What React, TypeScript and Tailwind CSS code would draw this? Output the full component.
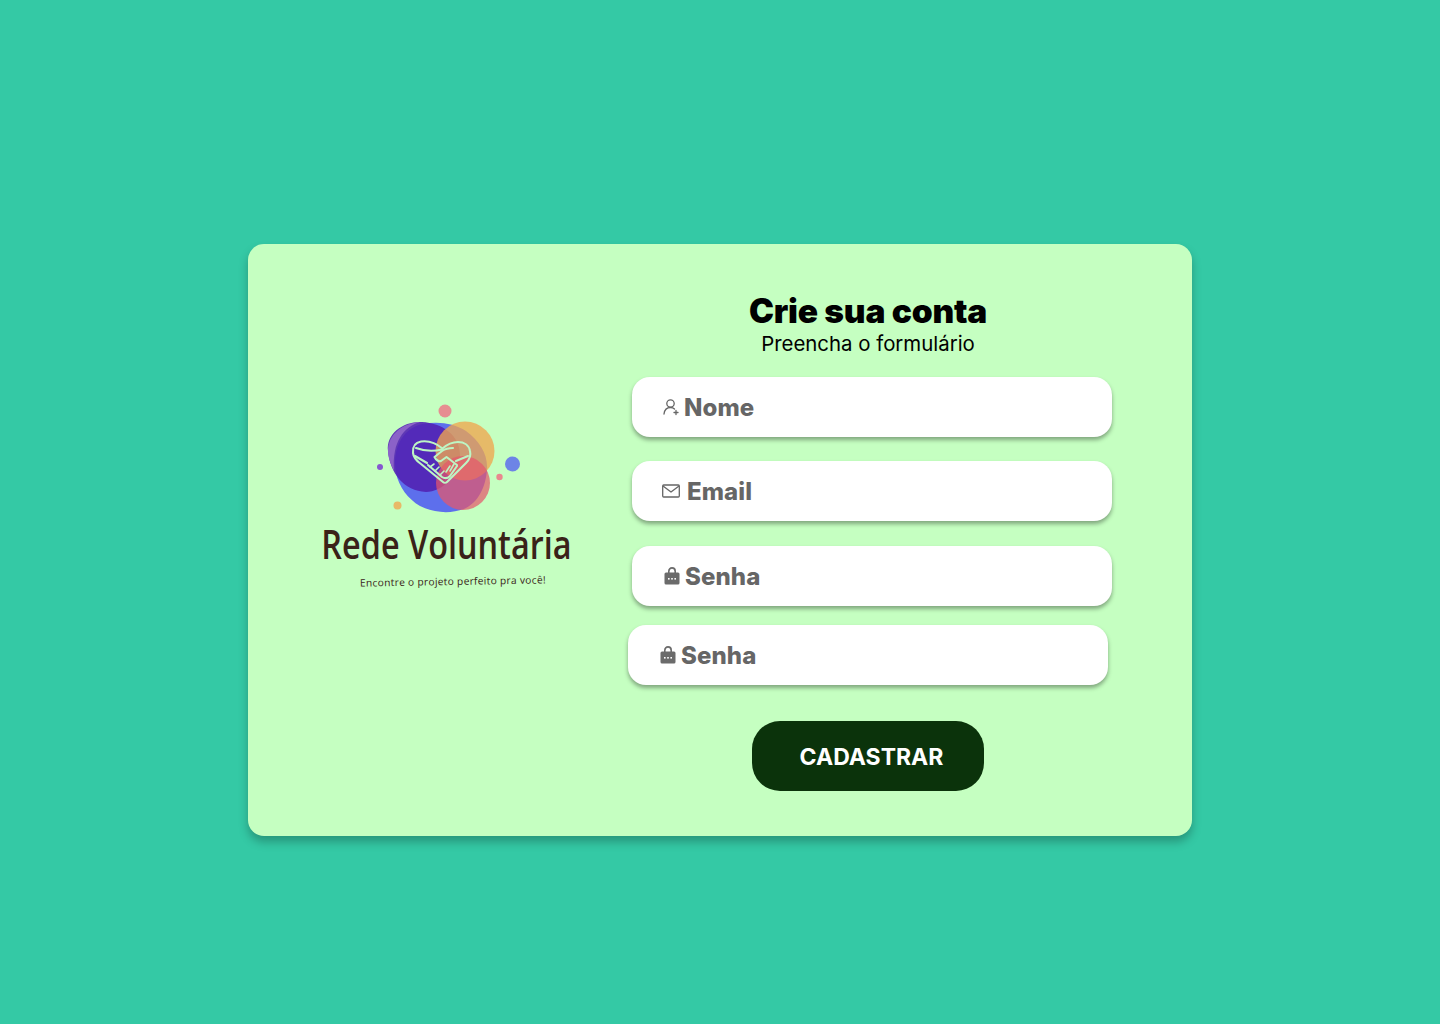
import React from "react";

const LogoArt = () => (
  <svg width="155" height="115" viewBox="0 0 155 115" className="-ml-[2px] block">
    <path d="M26 72C22 52 30 28 52 23C68 20 84 22 96 30C110 40 118 54 117 68C116 86 108 102 94 108C80 113 64 112 50 105C38 98 29 86 26 72Z" fill="#5d6fec" />
    <path d="M18 50C16 32 34 20 52 21C72 22 90 34 90 54C90 74 72 91 56 91C34 90 20 72 18 50Z" fill="#5222b4" opacity="0.9" />
    <path d="M24 70C20 62 18 56 18 50C18 34 32 22 50 21C34 26 22 40 24 70Z" fill="#8b62c8" />
    <circle cx="95" cy="50" r="29.500" fill="#f0a750" opacity="0.78" />
    <circle cx="93" cy="82" r="27" fill="#e4576b" opacity="0.72" />
    <circle cx="75" cy="10" r="6.500" fill="#ee7285" opacity="0.8" />
    <circle cx="142.500" cy="63" r="7.500" fill="#5d6fec" opacity="0.85" />
    <circle cx="129.500" cy="76" r="3.200" fill="#ee7285" opacity="0.85" />
    <circle cx="10" cy="66" r="3" fill="#7d45d0" opacity="0.9" />
    <circle cx="27.500" cy="104.500" r="4" fill="#f0a750" opacity="0.8" />
    <g fill="none" stroke="#bdf5c4" strokeWidth="2.100" strokeLinecap="round" strokeLinejoin="round">
      <path d="M72.500 47.500C66 42 58 39.500 51 40.500C45 41.500 42.500 46 43 52C43.500 56 46 59.500 51 63L73 81C74 82 76 82 77 81L96 62C99 59 101 54 100 50C99 44 94 41 88 41C82 41 77 43.500 72.500 47.500Z" />
      <path d="M46 47C54 50 63 50.500 72 48.500" />
      <path d="M83 47C78 47 75 48 72 50L64.500 56C66 59 69 61 71 60L76.500 56L87 64" />
      <path d="M86 60L98 55" />
      <path d="M45 55L57 62" />
      <path d="M58 64L72 76C75 78 78 77 80 75L87 65" />
      <path d="M60 66L64 63M65 70L69 66M70 74L74 70M76 71L80 65M80 70L84 63" strokeWidth="1.600" />
    </g>
  </svg>
);

const UserIcon = () => (
  <svg width="18" height="18" viewBox="0 0 18 18" fill="none" stroke="#666" strokeWidth="1.300" strokeLinecap="round">
    <circle cx="8.500" cy="5.500" r="3.700" />
    <path d="M2 16C2.500 12 5 9.500 8.500 9.500C10 9.500 11.500 10 12.500 11" />
    <path d="M14 12.500V16.500M12 14.500H16" />
  </svg>
);

const MailIcon = () => (
  <svg width="20" height="16" viewBox="0 0 20 16" fill="none" stroke="#666" strokeWidth="1.300" strokeLinejoin="round">
    <rect x="1.700" y="2" width="16.600" height="12" rx="1" />
    <path d="M2 3L10 9L18 3" />
  </svg>
);

const LockIcon = () => (
  <svg width="16" height="18" viewBox="0 0 16 18">
    <path d="M4.800 6V4.200C4.800 2 6.200 0.900 8 0.900S11.200 2 11.200 4.200V6" fill="none" stroke="#6b6b6b" strokeWidth="1.600" />
    <rect x="0.500" y="5.500" width="15" height="12" rx="1.500" fill="#6b6b6b" />
    <rect x="4" y="11" width="1.600" height="1.600" fill="#fff" />
    <rect x="7.200" y="11" width="1.600" height="1.600" fill="#fff" />
    <rect x="10.400" y="11" width="1.600" height="1.600" fill="#fff" />
  </svg>
);

const Field = ({ icon, label, className }: { icon: React.ReactNode; label: string; className: string }) => (
  <div className={`flex h-[60px] w-[480px] items-center rounded-[18px] bg-white shadow-[0_3px_4px_rgba(0,0,0,0.35)] ${className}`}>
    {icon}
    <span className="pt-[2px] text-[24px] font-extrabold leading-none tracking-[0.1px] text-[#666666]">{label}</span>
  </div>
);

export default function App() {
  return (
    <div className="flex min-h-[1024px] items-start justify-center bg-[#34c9a5] pt-[244px] font-['Inter','Liberation_Sans',sans-serif]">
      <div className="flex h-[592px] w-[944px] rounded-[16px] bg-[#c5ffc1] shadow-[0_6px_10px_rgba(0,0,0,0.25)]">
        <div className="ml-[72px] flex w-[256px] flex-col items-center pt-[157px]">
          <LogoArt />
          <span className="-ml-[3px] mt-[5px] origin-center scale-x-[0.81] whitespace-nowrap font-['Open_Sans',sans-serif] text-[40px] font-semibold leading-[46px] text-[#3a2218]">
            Rede Voluntária
          </span>
          <span className="ml-[9px] mt-[7px] -rotate-1 whitespace-nowrap font-['Open_Sans',sans-serif] text-[10.200px] leading-[14px] tracking-[0.3px] text-[#3a2218]">
            Encontre o projeto perfeito pra você!
          </span>
        </div>
        <div className="ml-[52px] flex w-[484px] flex-col pt-[47px]">
          <h1 className="w-[480px] text-center text-[33.500px] font-black leading-[40px] tracking-[-0.2px] text-black">Crie sua conta</h1>
          <p className="w-[480px] pt-[1px] text-center text-[20.400px] font-normal leading-[24px] text-black">Preencha o formulário</p>
          <Field className="ml-[4px] mt-[21px] pl-[30px]" icon={<span className="mr-[4px] flex"><UserIcon /></span>} label="Nome" />
          <Field className="ml-[4px] mt-[24px] pl-[29px]" icon={<span className="mr-[6px] flex"><MailIcon /></span>} label="Email" />
          <Field className="ml-[4px] mt-[25px] pl-[32px]" icon={<span className="mr-[5px] flex"><LockIcon /></span>} label="Senha" />
          <Field className="mt-[19px] pl-[32px]" icon={<span className="mr-[5px] flex"><LockIcon /></span>} label="Senha" />
          <button className="ml-[124px] mt-[36px] flex h-[70px] w-[232px] items-center justify-center rounded-[28px] bg-[#0b330b] pl-[7px] pt-[2px] text-[23px] font-bold text-white">
            CADASTRAR
          </button>
        </div>
      </div>
    </div>
  );
}
